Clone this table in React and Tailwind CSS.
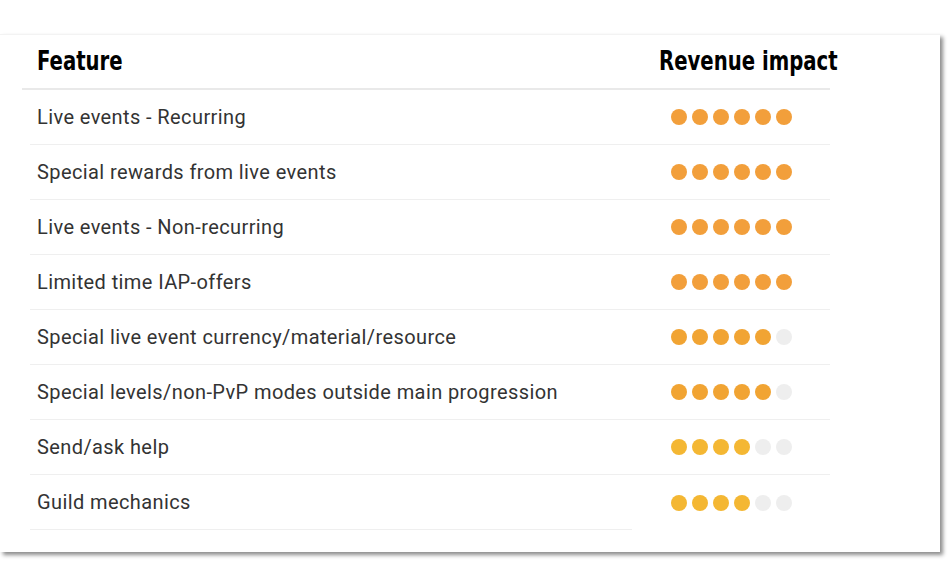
import React from "react";

const rows = [
  { name: "Live events - Recurring", n: 6, c: "bg-[#f29f3b]" },
  { name: "Special rewards from live events", n: 6, c: "bg-[#f29f3b]" },
  { name: "Live events - Non-recurring", n: 6, c: "bg-[#f29f3b]" },
  { name: "Limited time IAP-offers", n: 6, c: "bg-[#f29f3b]" },
  { name: "Special live event currency/material/resource", n: 5, c: "bg-[#f1a433]" },
  { name: "Special levels/non-PvP modes outside main progression", n: 5, c: "bg-[#f1a433]" },
  { name: "Send/ask help", n: 4, c: "bg-[#f4b733]" },
  { name: "Guild mechanics", n: 4, c: "bg-[#f4b733]" },
];

function Dots({ n, c }) {
  const items = [0, 1, 2, 3, 4, 5];
  return (
    <div className="flex gap-[5px]">
      {items.map((i) => (
        <span
          key={i}
          className={"block w-4 h-4 rounded-full " + (i < n ? c : "bg-[#eeeeee]")}
        />
      ))}
    </div>
  );
}

const headFont = { fontFamily: "'DejaVu Sans Condensed', 'DejaVu Sans', sans-serif" };

export default function App() {
  return (
    <div className="w-[950px] h-[566px] bg-white overflow-hidden pt-[34px]">
      <div
        className="w-[940px] h-[518px] bg-white shadow-[3px_3px_4px_rgba(0,0,0,0.45)] border-t border-[#f3f3f3]"
        style={{ fontFamily: "Roboto, 'Liberation Sans', sans-serif" }}
      >
        <div className="ml-[22px] w-[808px] h-[55px] flex items-center border-b-2 border-[#e9e9e9]">
          <div className="w-[610px] pl-[15px]">
            <span
              className="inline-block text-[27px] font-bold text-black leading-none scale-x-[0.81] origin-left"
              style={headFont}
            >
              Feature
            </span>
          </div>
          <div className="w-[198px] pl-[27px] whitespace-nowrap">
            <span
              className="inline-block text-[27px] font-bold text-black leading-none scale-x-[0.81] origin-left"
              style={headFont}
            >
              Revenue impact
            </span>
          </div>
        </div>
        {rows.map((r, i) => (
          <div key={i} className="flex h-[55px]">
            <div className="ml-[30px] w-[602px] pl-[7px] flex items-center border-b border-[#efefef] text-[20px] tracking-[0.4px] text-[#333333]">
              {r.name}
            </div>
            <div
              className={
                "w-[198px] flex items-center justify-center " +
                (i < rows.length - 1 ? "border-b border-[#efefef]" : "")
              }
            >
              <Dots n={r.n} c={r.c} />
            </div>
          </div>
        ))}
      </div>
    </div>
  );
}
